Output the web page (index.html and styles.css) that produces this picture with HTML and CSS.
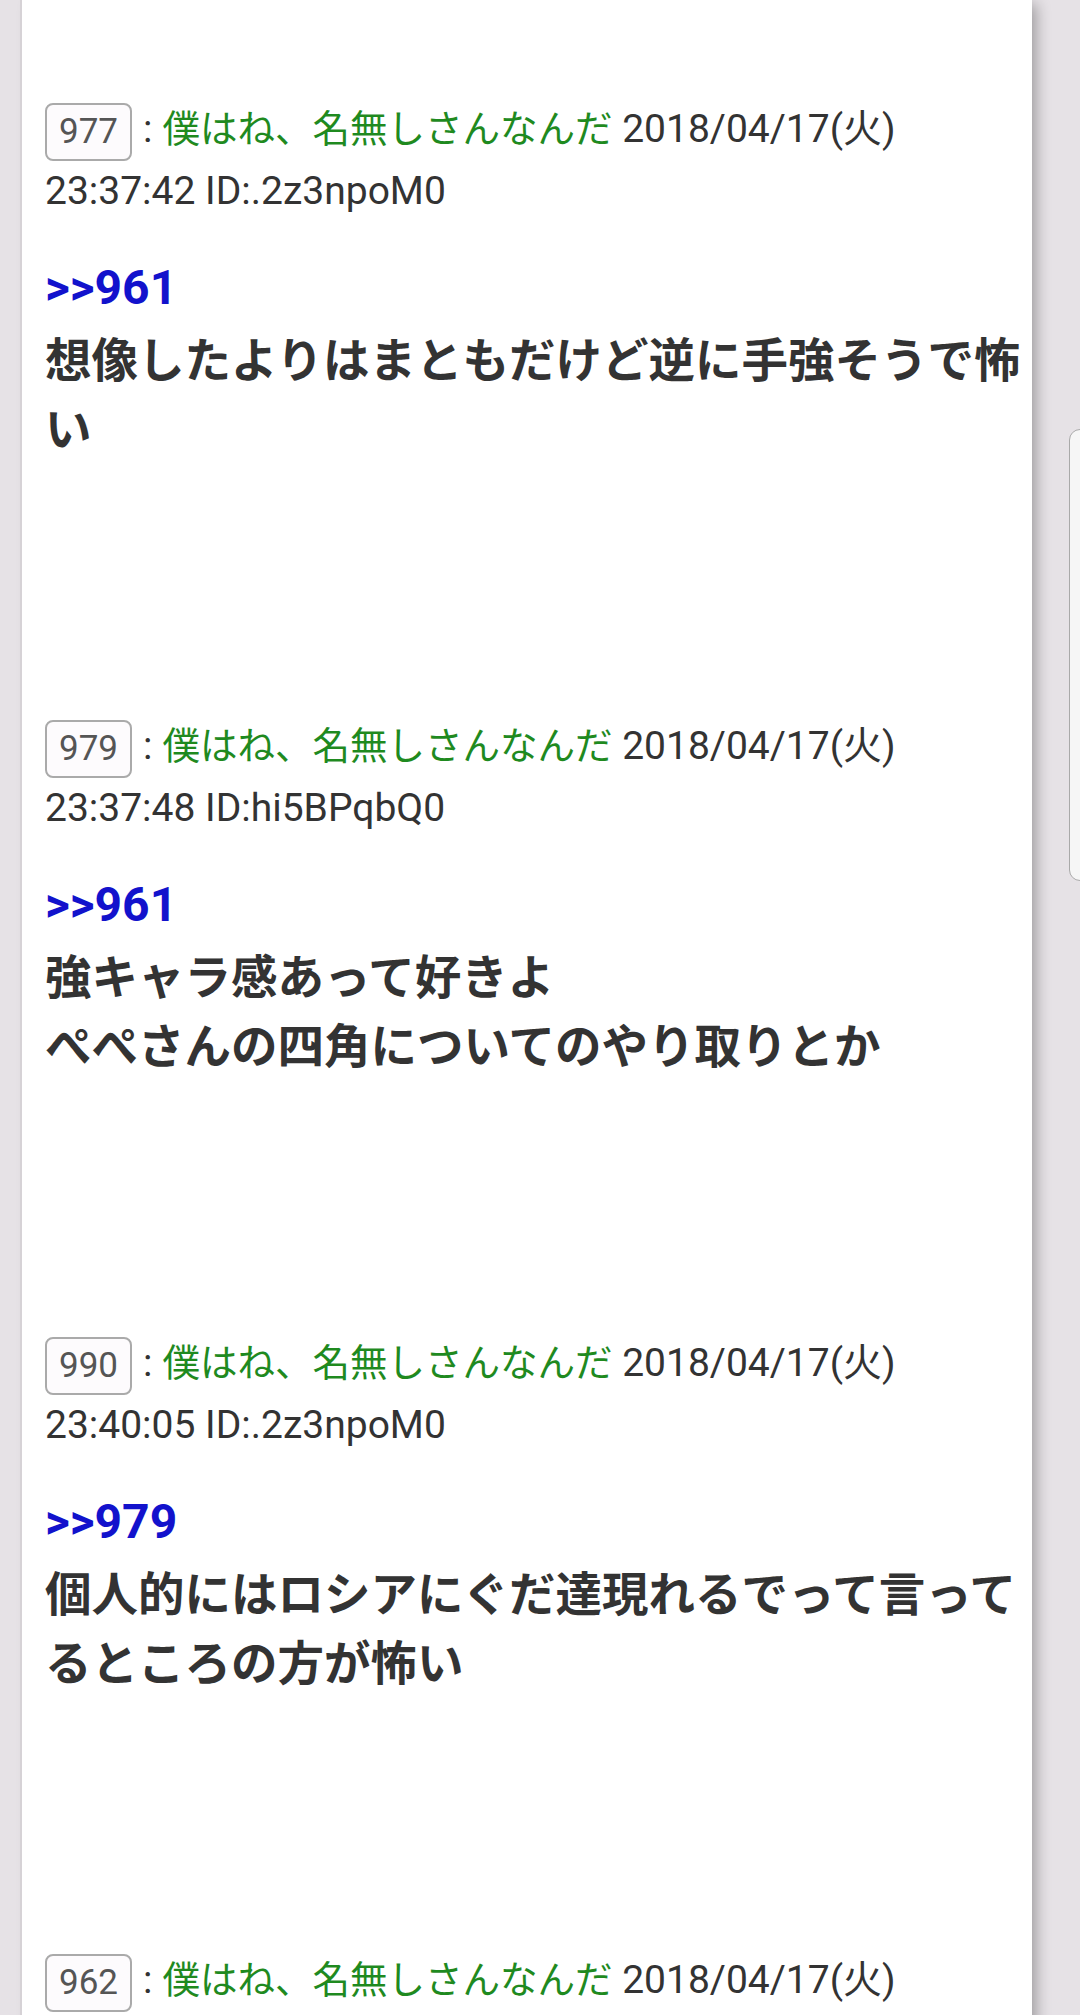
FILE: index.html
```html
<!DOCTYPE html>
<html lang="ja">
<head>
  <meta charset="UTF-8">
  <title>スレッド</title>
  <link rel="stylesheet" href="styles.css">
</head>
<body>

  <div class="thread">

    <article class="res">
      <div class="res-head"><span class="num">977</span><span class="sep">:</span><span class="name">僕はね、名無しさんなんだ</span> 2018/04/17(火) 23:37:42 ID:.2z3npoM0</div>
      <div class="res-body"><a class="anchor" href="#r961">&gt;&gt;961</a><br>想像したよりはまともだけど逆に手強そうで怖い</div>
    </article>

    <article class="res">
      <div class="res-head"><span class="num">979</span><span class="sep">:</span><span class="name">僕はね、名無しさんなんだ</span> 2018/04/17(火) 23:37:48 ID:hi5BPqbQ0</div>
      <div class="res-body"><a class="anchor" href="#r961">&gt;&gt;961</a><br>強キャラ感あって好きよ<br>ぺぺさんの四角についてのやり取りとか</div>
    </article>

    <article class="res">
      <div class="res-head"><span class="num">990</span><span class="sep">:</span><span class="name">僕はね、名無しさんなんだ</span> 2018/04/17(火) 23:40:05 ID:.2z3npoM0</div>
      <div class="res-body"><a class="anchor" href="#r979">&gt;&gt;979</a><br>個人的にはロシアにぐだ達現れるでって言ってるところの方が怖い</div>
    </article>

    <article class="res">
      <div class="res-head"><span class="num">962</span><span class="sep">:</span><span class="name">僕はね、名無しさんなんだ</span> 2018/04/17(火)</div>
    </article>

  </div>

  <!-- scroll thumb on the right edge -->
  <div class="scroll-thumb"></div>

</body>
</html>
```

FILE: styles.css
```css
* { box-sizing: border-box; margin: 0; padding: 0; }

html, body {
  height: 2015px;
  overflow: hidden;
}

body {
  background: #e6e2e6;
  font-family: Roboto, "Noto Sans CJK JP", sans-serif;
  color: #333;
}

.thread {
  background: #fff;
  margin: 0 48px 0 20px;
  min-height: 2015px;
  padding: 99px 10px 0 23px;
  border-left: 2px solid #d6d2d6;
  box-shadow: 8px 0 14px -4px rgba(0,0,0,0.32);
}

.res {
  height: 617px;
}

.res-head {
  font-size: 39px;
  line-height: 61px;
}

.num {
  display: inline-block;
  width: 87px;
  height: 58px;
  line-height: 54px;
  border: 2px solid #aaa;
  border-radius: 8px;
  background: #fdfbfd;
  color: #555;
  font-size: 35px;
  text-align: center;
  vertical-align: middle;
}

.sep {
  margin: 0 10px 0 11px;
}

.name {
  color: #1f8a1f;
  font-size: 37.5px;
}

.res-body {
  margin-top: 27px;
  font-family: "Noto Sans CJK JP", sans-serif;
  font-size: 46.5px;
  font-weight: bold;
  line-height: 69px;
}

.anchor {
  color: #1212cc;
  text-decoration: none;
  font-family: Roboto, "Noto Sans CJK JP", sans-serif;
  font-size: 48px;
}

.scroll-thumb {
  position: fixed;
  top: 429px;
  left: 1069px;
  width: 20px;
  height: 452px;
  background: #f6f6f6;
  border: 1px solid #a9a9a9;
  border-radius: 11px 0 0 11px;
}
```
